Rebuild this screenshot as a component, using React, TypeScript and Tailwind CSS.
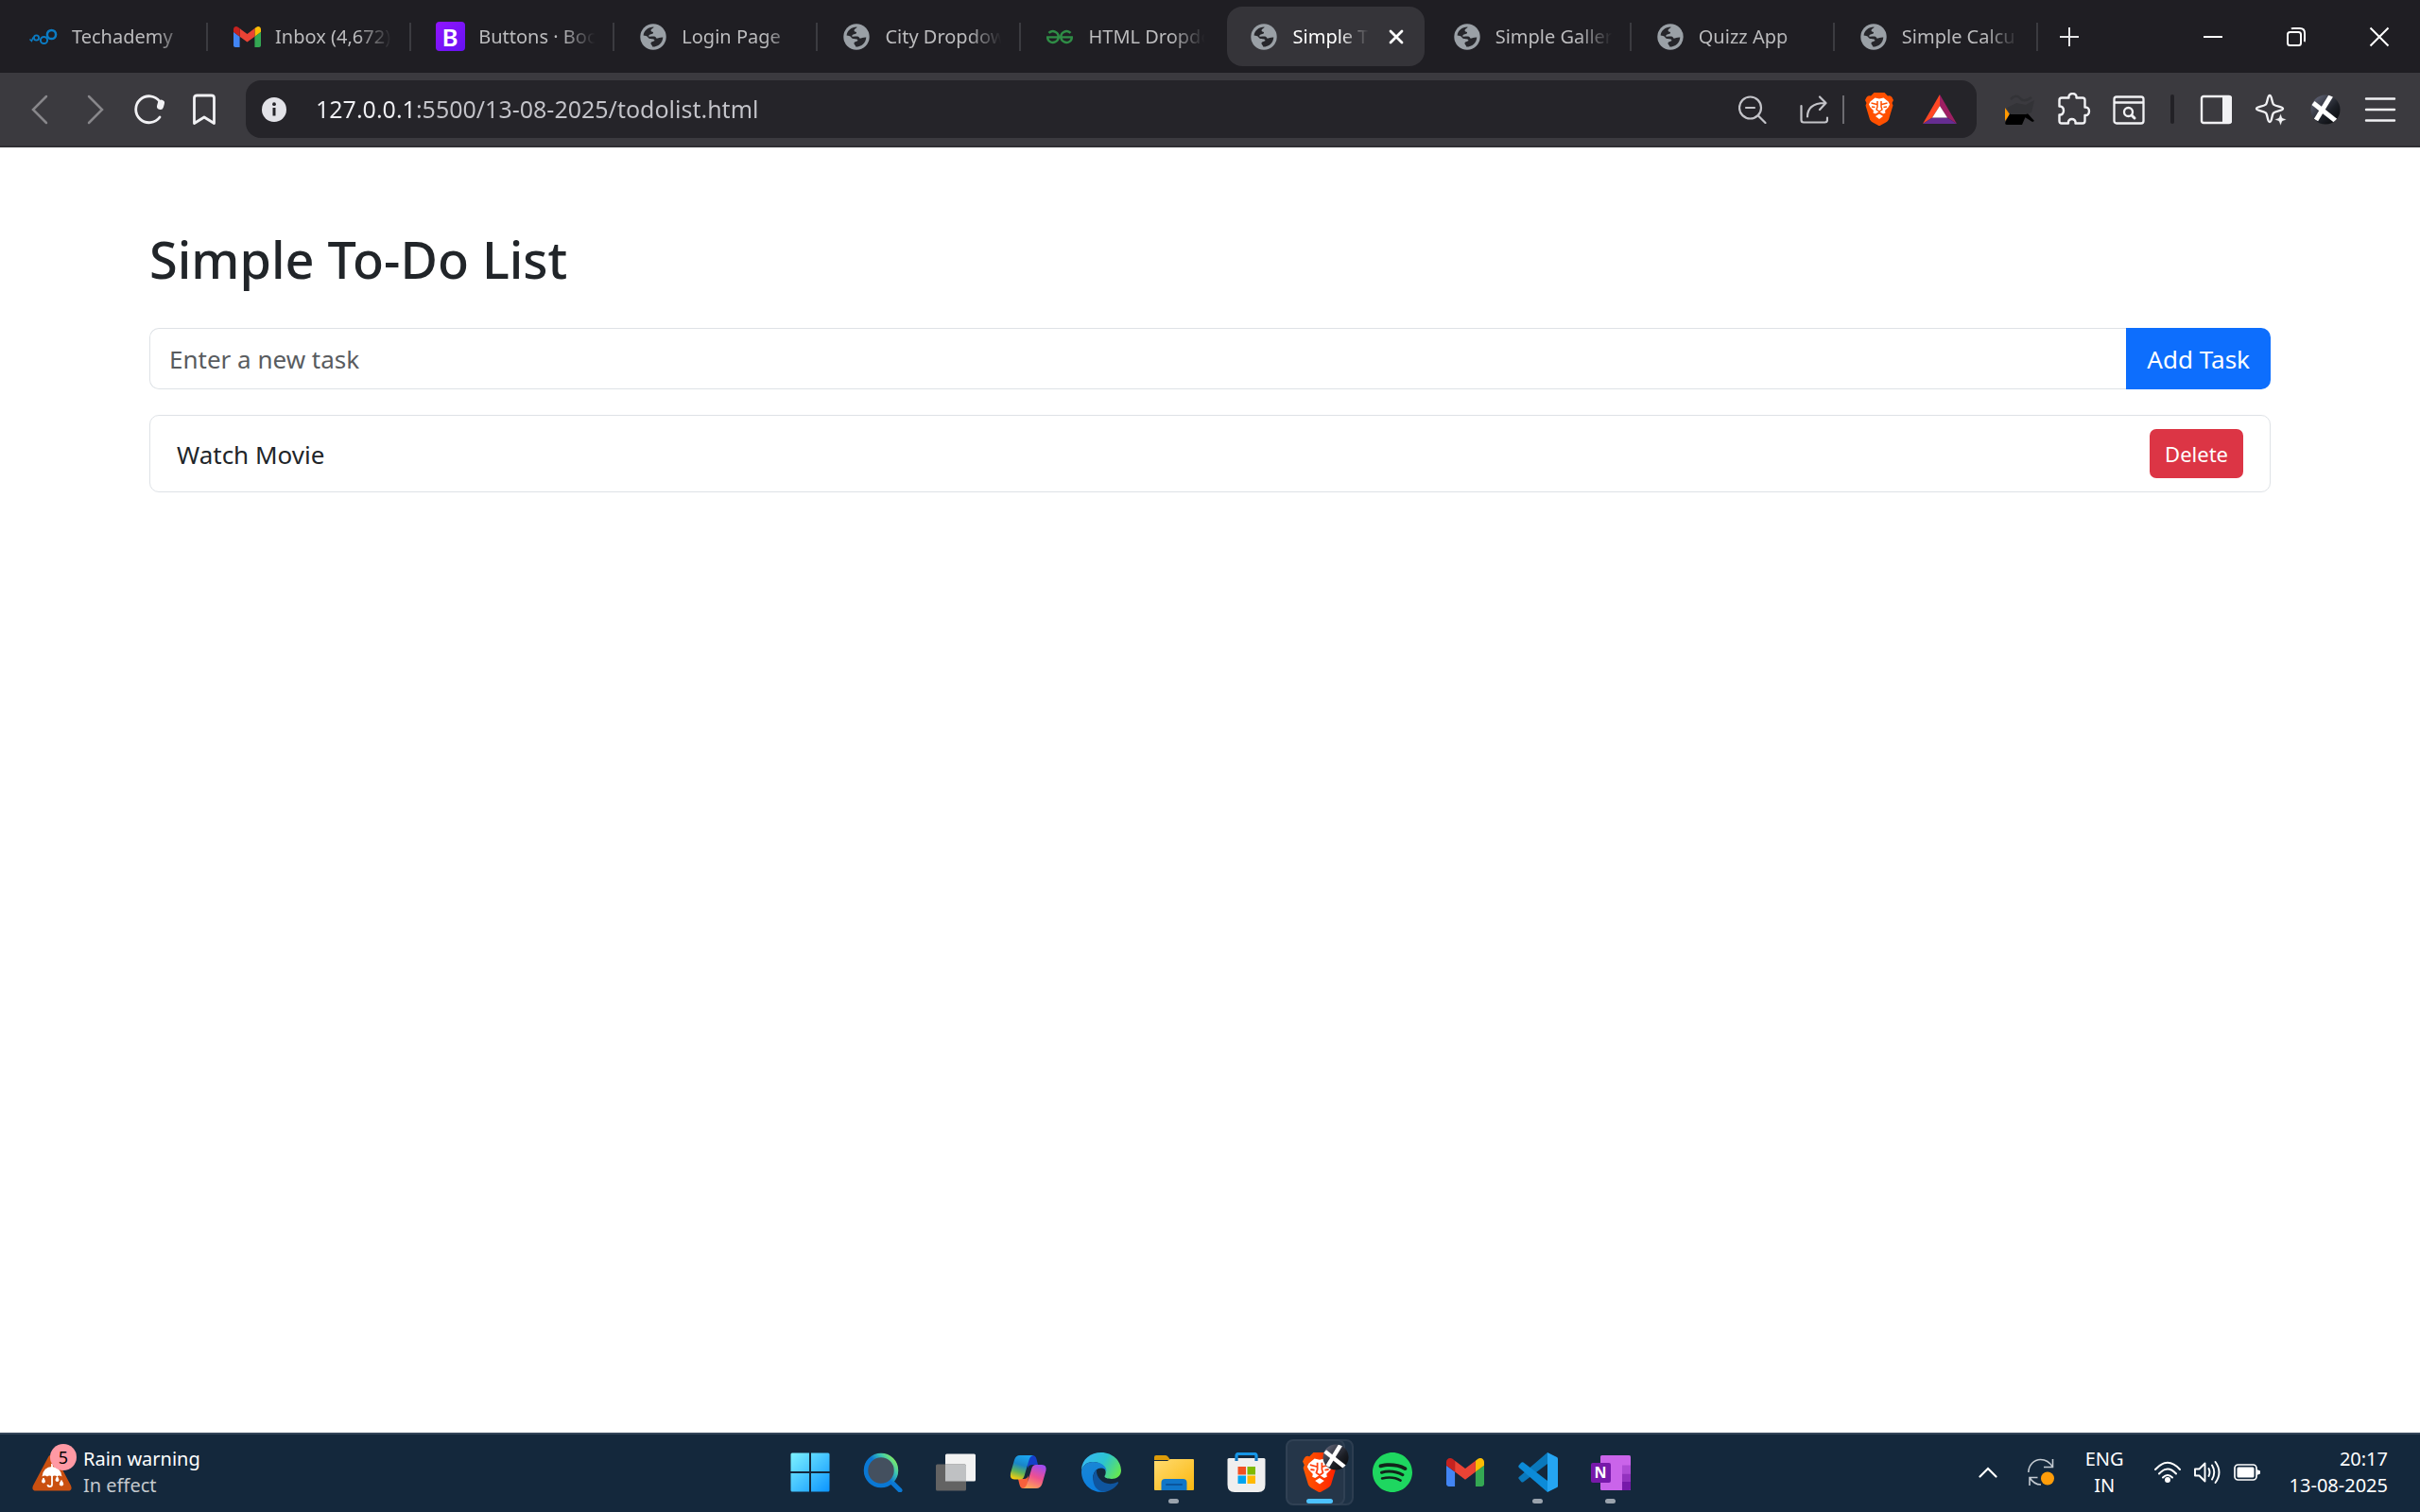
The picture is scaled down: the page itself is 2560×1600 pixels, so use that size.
import React, { useState } from "react";
import { SiBrave, SiGeeksforgeeks, SiSpotify } from "react-icons/si";

function GlobeIcon() {
  return (
    <svg viewBox="0 0 28 28" className="size-7">
      <circle cx="14" cy="14" r="13.7" fill="#9aa0a6" />
      <path d="M3.6 12.6C4 7.5 8.500 3.700 14.500 3.600C15 5 11.600 5 11.600 7.400C11.600 9 14.600 8 14 10C13.400 11.500 9.500 10.800 9 13.600C12.500 14 16.500 12.600 17.300 15.400C19 15.800 20.300 14.200 24.300 14.400C24 20 19.500 24.500 13.200 24.500C13.200 22.500 10.700 21.800 11.700 20C13 18.200 15.600 19.600 15.300 17.200C14.500 15.800 11 16.800 9 15.200C8 14.200 8 13 3.600 12.600Z" fill="#26262b" />
    </svg>
  );
}

function TechademyIcon() {
  return (
    <svg viewBox="0 0 32 24" className="h-6 w-8" fill="none" stroke="#0b7cc4">
      <path d="M1.500 14.500L3.500 16.500L5 12.500" strokeWidth="1.500" />
      <circle cx="8.500" cy="13" r="2.600" strokeWidth="1.800" />
      <circle cx="16.500" cy="15.500" r="3.600" strokeWidth="2" />
      <circle cx="24.500" cy="9.500" r="4.600" strokeWidth="2.500" />
    </svg>
  );
}

function GmailIcon({ className }: { className: string }) {
  return (
    <svg viewBox="52 42 88 66" className={className}>
      <path fill="#4285f4" d="M58 108h14V74L52 59v43c0 3.320 2.690 6 6 6" />
      <path fill="#34a853" d="M120 108h14c3.320 0 6-2.690 6-6V59l-20 15" />
      <path fill="#fbbc04" d="M120 48v26l20-15v-8c0-7.420-8.470-11.650-14.400-7.200" />
      <path fill="#ea4335" d="M72 74V48l24 18 24-18v26L96 92" />
      <path fill="#c5221f" d="M52 51v8l20 15V48l-5.600-4.200c-5.940-4.450-14.400-.22-14.400 7.200" />
    </svg>
  );
}

function BootstrapIcon() {
  return (
    <span className="flex size-[31px] items-center justify-center rounded-[4px] bg-linear-to-br from-[#9013fe] to-[#6610f2] text-[26px] leading-none font-semibold text-white">
      B
    </span>
  );
}

function ProfileIcon({ className }: { className: string }) {
  return (
    <svg viewBox="0 0 32 32" className={className}>
      <defs>
        <linearGradient id="profile" x1="0" y1="0" x2="1" y2="1">
          <stop offset="0" stopColor="#6d7084" />
          <stop offset=".6" stopColor="#1c1f26" />
          <stop offset="1" stopColor="#050607" />
        </linearGradient>
        <clipPath id="profileClip">
          <circle cx="16" cy="16" r="15.500" />
        </clipPath>
      </defs>
      <circle cx="16" cy="16" r="15.500" fill="url(#profile)" />
      <g clipPath="url(#profileClip)" stroke="#fff" strokeWidth="5">
        <path d="M22 1L6 27" />
        <path d="M3 9L27 28" />
      </g>
    </svg>
  );
}

type Tab = { title: string; icon: React.ReactNode; divider: boolean; active?: boolean };

const tabs: Tab[] = [
  { title: "Techademy", icon: <TechademyIcon />, divider: true },
  { title: "Inbox (4,672)", icon: <GmailIcon className="h-[22px] w-[29px]" />, divider: true },
  { title: "Buttons · Boo", icon: <BootstrapIcon />, divider: true },
  { title: "Login Page", icon: <GlobeIcon />, divider: true },
  { title: "City Dropdow", icon: <GlobeIcon />, divider: true },
  { title: "HTML Dropdo", icon: <SiGeeksforgeeks className="size-7 text-[#2f8d46]" />, divider: false },
  { title: "Simple T", icon: <GlobeIcon />, divider: false, active: true },
  { title: "Simple Galler", icon: <GlobeIcon />, divider: true },
  { title: "Quizz App", icon: <GlobeIcon />, divider: true },
  { title: "Simple Calcu", icon: <GlobeIcon />, divider: true },
];

function TabStrip() {
  return (
    <div className="flex items-center bg-[#1f1e23] pl-[5px] text-white">
      <div role="tablist" aria-label="Open tabs" className="flex w-[2151px] min-w-0 items-center py-[7px]">
        {tabs.map((tab) => (
          <div
            key={tab.title}
            className={
              tab.divider
                ? "relative flex min-w-0 flex-1 items-center after:absolute after:right-0 after:h-[30px] after:w-0.5 after:bg-[#3b3b40]"
                : "relative flex min-w-0 flex-1 items-center"
            }
          >
            <div
              className={
                tab.active
                  ? "mr-1 ml-0.5 flex min-w-0 flex-1 items-center rounded-2xl bg-[#353439] pr-5"
                  : "flex min-w-0 flex-1 items-center"
              }
            >
              <button
                role="tab"
                aria-selected={!!tab.active}
                className={
                  tab.active
                    ? "flex h-[63px] min-w-0 flex-1 items-center pl-[23px]"
                    : "flex h-[63px] min-w-0 flex-1 items-center pl-[25px]"
                }
              >
                <span className="flex w-8 shrink-0 items-center justify-center">{tab.icon}</span>
                <span
                  className={
                    tab.active
                      ? "ml-[15px] w-20 overflow-hidden text-left text-xl whitespace-nowrap text-white [mask-image:linear-gradient(to_right,#000_60%,transparent)]"
                      : "ml-[14px] w-[126px] overflow-hidden text-left text-xl whitespace-nowrap text-[#bcbcbe] [mask-image:linear-gradient(to_right,#000_70%,transparent_98%)]"
                  }
                >
                  {tab.title}
                </span>
              </button>
              {tab.active && (
                <button aria-label="Close tab" className="shrink-0">
                  <svg viewBox="0 0 20 20" className="size-5" stroke="#fff" strokeWidth="2.800" strokeLinecap="round">
                    <path d="M4 4L16 16M16 4L4 16" />
                  </svg>
                </button>
              )}
            </div>
          </div>
        ))}
      </div>
      <button aria-label="New tab" className="ml-[22px]">
        <svg viewBox="0 0 22 22" className="size-[22px]" stroke="#e6e6e8" strokeWidth="2">
          <path d="M11 1V21M1 11H21" />
        </svg>
      </button>
      <div className="ml-auto flex items-center gap-[66px] pr-8">
        <button aria-label="Minimize">
          <svg viewBox="0 0 22 22" className="size-[22px]" stroke="#fff" strokeWidth="2">
            <path d="M1 11H21" />
          </svg>
        </button>
        <button aria-label="Restore">
          <svg viewBox="0 0 22 22" className="size-[22px]" fill="none" stroke="#fff" strokeWidth="2">
            <rect x="2" y="6" width="14" height="14" rx="2.500" />
            <path d="M6 2.500Q6.500 2 8 2H15Q20 2 20 7V14Q20 15.500 19.500 16" />
          </svg>
        </button>
        <button aria-label="Close window">
          <svg viewBox="0 0 22 22" className="size-[22px]" stroke="#fff" strokeWidth="2">
            <path d="M1.500 1.500L20.500 20.500M20.500 1.500L1.500 20.500" />
          </svg>
        </button>
      </div>
    </div>
  );
}

function ToolButton({ label, children }: { label: string; children: React.ReactNode }) {
  return (
    <button aria-label={label} className="flex size-[34px] shrink-0 items-center justify-center">
      {children}
    </button>
  );
}

function BraveLion({ className, fill }: { className: string; fill: string }) {
  return (
    <svg viewBox="0 0 60 70" className={className}>
      <path
        d="M19 0H41L48 7Q54 5 57 10L60 16L57 22L59 27L50 57Q48 61 44 63L33 69Q30 71 27 69L16 63Q12 61 10 57L1 27L3 22L0 16L3 10Q6 5 12 7Z"
        fill={fill}
      />
      <path
        d="M30 13L39 11L49 19L52 25L49 31L42 38L43 43L38 45L30 40L22 45L17 43L18 38L11 31L8 25L11 19L21 11Z"
        fill="#fff"
      />
      <path d="M30 45L38 50L30 56L22 50Z" fill="#fff" />
      <path
        d="M13 22L25 25M47 22L35 25M26 18V30L24 36L30 40L36 36L34 30V18M14 30L21 31M46 30L39 31"
        fill="none"
        stroke={fill.startsWith("url") ? "#ff4010" : fill}
        strokeWidth="3"
        strokeLinejoin="round"
      />
    </svg>
  );
}

function Toolbar() {
  return (
    <div className="flex items-center border-b-2 border-[#302f34] bg-[#3b3a3f] px-[25px] py-2">
      <nav aria-label="Navigation" className="flex items-center gap-6">
        <ToolButton label="Back">
          <svg viewBox="0 0 34 34" className="size-[34px]" fill="none" stroke="#88878b" strokeWidth="2.500" strokeLinecap="round">
            <path d="M24 3L10 17L24 31" />
          </svg>
        </ToolButton>
        <ToolButton label="Forward">
          <svg viewBox="0 0 34 34" className="size-[34px]" fill="none" stroke="#88878b" strokeWidth="2.500" strokeLinecap="round">
            <path d="M11 3L25 17L11 31" />
          </svg>
        </ToolButton>
        <ToolButton label="Reload">
          <svg viewBox="0 0 34 34" className="size-[34px]" fill="none" stroke="#f1f1f4" strokeLinecap="round">
            <path d="M28 25A14 14 0 1 1 28 8.500" strokeWidth="2.800" />
            <path d="M29.500 10L28.500 13.500" strokeWidth="7" />
          </svg>
        </ToolButton>
        <ToolButton label="Bookmark">
          <svg viewBox="0 0 34 34" className="size-[34px]" fill="none" stroke="#f1f1f4" strokeWidth="2.800" strokeLinejoin="round">
            <path d="M6.500 4.500Q6.500 2 9.500 2H24.500Q27.500 2 27.500 4.500V31.500L17 25L6.500 31.500Z" />
          </svg>
        </ToolButton>
      </nav>

      <div className="mr-7 ml-[27px] flex h-[61px] min-w-0 flex-1 items-center rounded-2xl bg-[#252429] pr-[21px] pl-[17px]">
        <button aria-label="Site information">
          <svg viewBox="0 0 26 26" className="size-[26px]">
            <circle cx="13" cy="13" r="13" fill="#e3e3e8" />
            <path d="M13 11V19.500" stroke="#252429" strokeWidth="3" />
            <circle cx="13" cy="7.200" r="1.900" fill="#252429" />
          </svg>
        </button>
        <input
          aria-label="Address"
          defaultValue="127.0.0.1:5500/13-08-2025/todolist.html"
          className="ml-[31px] min-w-0 flex-1 bg-[linear-gradient(to_right,#f0f0f4_105px,#c4c4ca_105px)] bg-clip-text pb-0.5 text-[25px] leading-9 text-transparent caret-white outline-none"
        />
        <button aria-label="Zoom out">
          <svg viewBox="0 0 30 30" className="size-[30px]" fill="none" stroke="#c3c3c8" strokeWidth="2.200" strokeLinecap="round">
            <circle cx="12.500" cy="13" r="11.500" />
            <path d="M8 13H17M21 21.500L28.500 29" />
          </svg>
        </button>
        <button aria-label="Share" className="ml-[35px]">
          <svg viewBox="0 0 30 30" className="size-[30px]" fill="none" stroke="#c3c3c8" strokeWidth="2.200" strokeLinecap="round" strokeLinejoin="round">
            <path d="M1.500 11V26Q1.500 28.500 4 28.500H26.500Q29 28.500 29 26V23.500" />
            <path d="M8 22.500C8 14 13 8 26.500 8M21 1.500L27.500 8L21 15" />
          </svg>
        </button>
        <span className="ml-[15px] h-[30px] w-0.5 bg-[#6c6b70]" />
        <button aria-label="Brave Shields" className="ml-[22px]">
          <BraveLion className="h-[35px] w-[30px]" fill="#ff5000" />
        </button>
        <button aria-label="Brave Rewards" className="ml-[31px]">
          <svg viewBox="0 0 36 32" className="h-8 w-9">
            <path d="M18 0L0 31L10 24.500L18 12Z" fill="#ff4724" />
            <path d="M18 0L36 31L26 24.500L18 12Z" fill="#9e1f63" />
            <path d="M0 31H36L26 24.500H10Z" fill="#662d91" />
            <path d="M18 12L10 24.500H26Z" fill="#fff" />
          </svg>
        </button>
      </div>

      <div className="flex items-center gap-6">
        <ToolButton label="Extension">
          <svg viewBox="0 0 34 34" className="size-[34px]">
            <path d="M2 15L7 22L2 29Z" fill="#ff9800" />
            <path d="M7 21.500H25L20 33H4Q1.500 33 2.500 30Z" fill="#000" />
            <path d="M25 20L33 29L31 30L23 25Z" fill="#000" />
            <path d="M4 15L14 10L24 12L33 7L30 20L24 22H8Z" fill="#333337" />
            <path d="M8 6Q14 0 18 5T30 4" fill="none" stroke="#333337" strokeWidth="2.500" />
          </svg>
        </ToolButton>
        <ToolButton label="Extensions">
          <svg viewBox="0 0 36 36" className="size-9 shrink-0" fill="none" stroke="#f1f1f4" strokeWidth="2.400" strokeLinejoin="round">
            <path d="M5 5.500H12.500C11.500 -0.500 21.500 -0.500 20.500 5.500H27Q29.500 5.500 29.500 8V15.500C35.500 14.500 35.500 25 29.500 24V30Q29.500 32.500 27 32.500H19.500C20.500 26.500 11 26.500 12 32.500H5Q2.500 32.500 2.500 30V23.500C8.500 24.500 8.500 13.500 2.500 14.500V8Q2.500 5.500 5 5.500Z" />
          </svg>
        </ToolButton>
        <ToolButton label="Search page">
          <svg viewBox="0 0 34 34" className="size-[34px]" fill="none" stroke="#f1f1f4" strokeWidth="2.300" strokeLinecap="round">
            <rect x="1.500" y="3.500" width="31" height="28" rx="2.500" />
            <path d="M2 9.500H32" />
            <circle cx="16.500" cy="19.500" r="4.500" />
            <path d="M20 23L23 26" strokeWidth="3" />
          </svg>
        </ToolButton>
        <span className="mx-[3px] h-[31px] w-1 rounded-full bg-[#222126]" />
        <ToolButton label="Sidebar">
          <svg viewBox="0 0 34 34" className="size-[34px]">
            <rect x="2" y="3" width="31" height="28" rx="2" fill="none" stroke="#f1f1f4" strokeWidth="2.400" />
            <path d="M24 3H31Q33 3 33 5V29Q33 31 31 31H24Z" fill="#f1f1f4" />
          </svg>
        </ToolButton>
        <ToolButton label="Leo AI">
          <svg viewBox="0 0 34 34" className="size-[34px]">
            <path
              d="M16 2C18.500 2 18 9 20 11.500C22.500 14 30 13.500 30 16C30 18.500 22.500 18 20 20.500C18 23 18.500 30 16 30C13.500 30 14 23 12 20.500C9.500 18 2 18.500 2 16C2 13.500 9.500 14 12 11.500C14 9 13.500 2 16 2Z"
              fill="none"
              stroke="#f1f1f4"
              strokeWidth="2.400"
            />
            <path d="M27.500 21L29.300 25.700L34 27.500L29.300 29.300L27.500 34L25.700 29.300L21 27.500L25.700 25.700Z" fill="#f1f1f4" stroke="#3b3a3f" strokeWidth=".5" />
          </svg>
        </ToolButton>
        <ToolButton label="Profile">
          <ProfileIcon className="size-8" />
        </ToolButton>
        <ToolButton label="Menu">
          <svg viewBox="0 0 34 34" className="size-[34px]" stroke="#f1f1f4" strokeWidth="2.400" strokeLinecap="round">
            <path d="M2 5.500H32M2 17H32M2 28.500H32" />
          </svg>
        </ToolButton>
      </div>
    </div>
  );
}

function TodoPage() {
  const [tasks, setTasks] = useState<string[]>(["Watch Movie"]);
  const [draft, setDraft] = useState("");

  function addTask(event: React.FormEvent) {
    event.preventDefault();
    if (draft.trim()) {
      setTasks([...tasks, draft.trim()]);
      setDraft("");
    }
  }

  return (
    <main className="flex-1 px-[158px] pt-[86px] text-[26px] leading-[39px] text-[#212529]">
      <h1 className="mb-10 text-[54px] leading-[65px] font-medium">Simple To-Do List</h1>
      <form onSubmit={addTask} className="mb-[27px] flex">
        <input
          aria-label="New task"
          value={draft}
          onChange={(event) => setDraft(event.target.value)}
          placeholder="Enter a new task"
          className="min-w-0 flex-1 rounded-l-[10px] border border-r-0 border-[#dee2e6] px-5 pt-[13px] pb-[11px] outline-none placeholder:text-[#595c5f]"
        />
        <button className="rounded-r-[10px] bg-[#0d6efd] px-[22px] pt-[14px] pb-3 text-white">Add Task</button>
      </form>
      <ul className="overflow-hidden rounded-[10px] border border-[#dee2e6]">
        {tasks.map((task, index) => (
          <li key={index} className="flex items-center justify-between border-[#dee2e6] px-7 py-3.5 not-last:border-b">
            <span className="pt-0.5">{task}</span>
            <button
              onClick={() => setTasks(tasks.filter((_, i) => i !== index))}
              className="rounded-[7px] bg-[#dc3545] px-4 py-[9px] text-[22px] leading-[34px] text-white"
            >
              Delete
            </button>
          </li>
        ))}
      </ul>
    </main>
  );
}

function WindowsIcon() {
  return (
    <svg viewBox="0 0 42 42" className="size-[42px]">
      <defs>
        <linearGradient id="win" gradientUnits="userSpaceOnUse" x1="0" y1="0" x2="42" y2="42">
          <stop offset="0" stopColor="#7ff3ff" />
          <stop offset="1" stopColor="#0a94ff" />
        </linearGradient>
      </defs>
      <path fill="url(#win)" d="M2 .5H20V20H.5V2Q.5.500 2 .5ZM22 .5H40Q41.500.500 41.500 2V20H22ZM.5 22H20V41.500H2Q.5 41.500.500 40ZM22 22H41.500V40Q41.500 41.500 40 41.500H22Z" />
    </svg>
  );
}

function SearchIcon() {
  return (
    <svg viewBox="0 0 42 42" className="size-[42px]">
      <defs>
        <linearGradient id="srch" x1=".3" y1=".6" x2=".9" y2=".1">
          <stop offset=".3" stopColor="#0a78d4" />
          <stop offset=".7" stopColor="#3fc8b0" />
          <stop offset="1" stopColor="#7be86a" />
        </linearGradient>
      </defs>
      <path d="M31 32L39 40" stroke="#0a78d4" strokeWidth="5" strokeLinecap="round" />
      <circle cx="19" cy="19" r="16" fill="#44505f" stroke="url(#srch)" strokeWidth="4.500" />
    </svg>
  );
}

function TaskViewIcon() {
  return (
    <svg viewBox="0 0 42 42" className="size-[42px]">
      <rect x="10" y="1.500" width="32" height="29" rx="1.500" fill="#f2f2f2" />
      <rect x="0" y="12.500" width="32" height="28" rx="1.500" fill="#636363" />
      <path d="M10 12.500H30.500Q32 12.500 32 14V30.500H10Z" fill="#bfc1c3" />
    </svg>
  );
}

function CopilotIcon() {
  return (
    <svg viewBox="0 0 42 42" className="size-[42px]">
      <defs>
        <linearGradient id="cpA" x1=".6" y1="0" x2=".3" y2="1">
          <stop offset="0" stopColor="#1ba5f0" />
          <stop offset=".4" stopColor="#1a86c8" />
          <stop offset=".7" stopColor="#5fb35a" />
          <stop offset="1" stopColor="#f5cc10" />
        </linearGradient>
        <linearGradient id="cpB" x1=".7" y1="0" x2=".3" y2="1">
          <stop offset="0" stopColor="#a04cf0" />
          <stop offset=".5" stopColor="#ee5090" />
          <stop offset="1" stopColor="#ffa456" />
        </linearGradient>
      </defs>
      <path d="M20 3H25Q28.500 3 29.500 7L31 13H25Q21 13 20 17Z" fill="#1440c8" />
      <path d="M20 38H15Q12.500 38 11.500 34L10 28H16Q20 28 21 24Z" fill="#f8603c" />
      <path d="M12 3H26Q22.500 4 21.500 8L16.500 25Q15.500 28.500 12 28.500H6Q1 28.500 2 22L6 8Q7.500 3 12 3Z" fill="url(#cpA)" />
      <path d="M29 38H15Q18.500 37 19.500 33L24.500 16.500Q25.500 13 29 13H35Q40.500 13 39.500 19L35.500 33Q34 38 29 38Z" fill="url(#cpB)" />
    </svg>
  );
}

function EdgeIcon() {
  return (
    <svg viewBox="0 0 42 42" className="size-[42px]">
      <defs>
        <linearGradient id="edA" x1="0" y1=".3" x2="1" y2=".7">
          <stop offset="0" stopColor="#36b8f2" />
          <stop offset=".5" stopColor="#2cc3d0" />
          <stop offset="1" stopColor="#66e84f" />
        </linearGradient>
        <linearGradient id="edB" x1=".3" y1="0" x2=".5" y2="1">
          <stop offset="0" stopColor="#1a86d4" />
          <stop offset="1" stopColor="#0a7ee0" />
        </linearGradient>
      </defs>
      <path d="M0 20C-.5 8 9 0 21 0C33 0 42 9 42 19C42 25 37 28 32 28C27 28 24 26.500 24.500 25C28 20 24 10 12 10C6 10 1 14 0 20Z" fill="url(#edA)" />
      <path d="M0 20C1 14 6 10 12 10C21 10 26.500 14.500 26.500 20C25 16 19 15 15 19C9 26 13 38 27 41C12 45 0 34 0 20Z" fill="url(#edB)" />
      <path d="M16 18C9 25 12 42 25 41.500C31 41 36 37 39 32.500C39.500 31.500 38.500 31 37.500 31.500C26 37 15 28 16 18Z" fill="#0f559f" />
    </svg>
  );
}

function FolderIcon() {
  return (
    <svg viewBox="0 0 42 42" className="size-[42px]">
      <defs>
        <linearGradient id="fld" x1="0" y1="0" x2="1" y2="1">
          <stop offset="0" stopColor="#ffdb70" />
          <stop offset="1" stopColor="#fbb80f" />
        </linearGradient>
      </defs>
      <path d="M0 5Q0 3 2 3H12Q13.500 3 15 5L17 8H0Z" fill="#dd9b08" />
      <path d="M0 9H14L17 7H41Q42 7 42 8V39Q42 40 41 40H1Q0 40 0 39Z" fill="url(#fld)" />
      <path d="M7.500 40V32Q7.500 28 11.500 28H30.500Q34.500 28 34.500 32V40Z" fill="#1076c8" />
      <path d="M13 34H29" stroke="#0b559c" strokeWidth="2" strokeLinecap="round" />
    </svg>
  );
}

function StoreIcon() {
  return (
    <svg viewBox="0 0 42 42" className="size-[42px]">
      <path d="M10 9V3.500Q10 1.500 12 1.500H29Q31 1.500 31 3.500V9" fill="none" stroke="#1796e6" strokeWidth="3.200" />
      <path d="M.5 7.500Q.5 6 2 6H39Q40.500 6 40.500 7.500V34Q40.500 42 33 42H8Q.5 42 .5 34Z" fill="#efefef" />
      <path d="M10 9V5.500M31 9V5.500" stroke="#1173b8" strokeWidth="3.200" />
      <path d="M11.500 15H20V23.500H11.500Z" fill="#f25022" />
      <path d="M21.500 15H30V23.500H21.500Z" fill="#7fba00" />
      <path d="M11.500 24.500H20V33H11.500Z" fill="#00a4ef" />
      <path d="M21.500 24.500H30V33H21.500Z" fill="#ffb900" />
    </svg>
  );
}

function VsCodeIcon() {
  return (
    <svg viewBox="0 0 42 42" className="size-[42px]">
      <path d="M.8 28Q-.3 27 .8 26L31 0V12L5.500 31.300Q4.300 32 3.200 31Z" fill="#0a78bb" />
      <path d="M.8 13.500Q-.3 14.800 .8 16L31 42V30L5.500 10.500Q4.300 9.800 3.200 10.800Z" fill="#0c8bd8" />
      <path d="M31 0L41 5Q42 5.500 42 6.500V35.500Q42 36.500 41 37L31 42Z" fill="#25a5f2" />
    </svg>
  );
}

function OneNoteIcon() {
  return (
    <span className="relative flex h-[37px] w-[42px] items-center">
      <svg viewBox="0 0 42 37" className="absolute h-[37px] w-[42px]">
        <rect x="10" y="0" width="32" height="37" rx="1.500" fill="#ca64ea" />
        <path d="M33 10.500H42V19.500H33Z" fill="#ae4bd5" />
        <path d="M33 19.500H42V28H33Z" fill="#9332bf" />
        <path d="M33 28H42V35.500Q42 37 40.500 37H33Z" fill="#7719aa" />
      </svg>
      <span className="relative flex size-[21px] items-center justify-center rounded-xs bg-[#7719aa] text-base leading-none font-bold text-white">
        N
      </span>
    </span>
  );
}

function BraveAppIcon() {
  return (
    <span className="relative flex w-[34px] justify-center">
      <svg className="absolute size-0">
        <defs>
          <linearGradient id="lion" x1="0" y1="0" x2="1" y2="0">
            <stop offset="0" stopColor="#ff5a00" />
            <stop offset="1" stopColor="#ff2000" />
          </linearGradient>
        </defs>
      </svg>
      <BraveLion className="h-[42px] w-9 shrink-0" fill="url(#lion)" />
      <span className="absolute -top-[9px] -right-[14px]">
        <ProfileIcon className="size-7" />
      </span>
    </span>
  );
}

const apps: { name: string; icon: React.ReactNode; open?: boolean; active?: boolean }[] = [
  { name: "Start", icon: <WindowsIcon /> },
  { name: "Search", icon: <SearchIcon /> },
  { name: "Task view", icon: <TaskViewIcon /> },
  { name: "Copilot", icon: <CopilotIcon /> },
  { name: "Edge", icon: <EdgeIcon /> },
  { name: "File Explorer", icon: <FolderIcon />, open: true },
  { name: "Microsoft Store", icon: <StoreIcon /> },
  { name: "Brave", icon: <BraveAppIcon />, active: true },
  {
    name: "Spotify",
    icon: (
      <span className="flex rounded-full bg-[#12241a]">
        <SiSpotify className="size-[42px] text-[#1ed760]" />
      </span>
    ),
  },
  { name: "Gmail", icon: <GmailIcon className="h-[30px] w-10" /> },
  { name: "Visual Studio Code", icon: <VsCodeIcon />, open: true },
  { name: "OneNote", icon: <OneNoteIcon />, open: true },
];

function Taskbar() {
  return (
    <footer className="grid grid-cols-[1fr_auto_1fr] items-center border-t-2 border-[#34465a] bg-[#14283c] pb-0.5 text-xl leading-7 text-white">
      <button className="flex items-center pl-[34px] text-left">
        <span className="relative flex">
          <svg viewBox="0 0 42 40" className="h-10 w-[42px]">
            <path d="M17.500 3Q21 -1 24.500 3L41 34Q43 39.500 38 39.500H4Q-1 39.500 1 34Z" fill="#ca5010" />
            <path d="M10.500 24.500Q12 14 21 14T31.500 24.500Q28.500 22.500 26.500 24.500Q24 22.500 21 24.500Q18 22.500 16 24.500Q13.500 22.500 10.500 24.500Z" fill="#fff" />
            <path d="M21 11V33Q21 35 18.500 35Q16.500 35 16.500 33" fill="none" stroke="#fff" strokeWidth="1.800" />
            <path d="M12 26Q15 31 12 31T12 26ZM26.500 24.500Q29.500 29.500 26.500 29.500T26.500 24.500ZM31 28.500Q34.500 34 31 34T31 28.500Z" fill="#fff" stroke="#fff" />
          </svg>
          <span className="absolute -top-2.5 -right-[5px] flex size-7 items-center justify-center rounded-full bg-[#ff99a4] text-lg leading-none text-black">
            5
          </span>
        </span>
        <span className="ml-3">
          <span className="block">Rain warning</span>
          <span className="block text-[#c3c8cd]">In effect</span>
        </span>
      </button>

      <nav aria-label="Apps" className="flex">
        {apps.map((app) => (
          <button
            key={app.name}
            aria-label={app.name}
            className="relative flex h-20 w-[77px] items-center justify-center"
          >
            {app.active && (
              <>
                <span className="absolute inset-y-[5px] right-0.5 left-9 rounded-lg border-2 border-[#2c3d50] bg-[#1d3145]" />
                <span className="absolute inset-y-[5px] right-[11px] left-[3px] rounded-lg border-2 border-[#304154] bg-[#253649]" />
                <span className="absolute bottom-[7px] h-[5px] w-7 rounded-full bg-[#4cc2ff]" />
              </>
            )}
            {app.open && <span className="absolute bottom-[7px] h-[5px] w-[11px] rounded-full bg-[#9aa3ad]" />}
            {app.icon}
          </button>
        ))}
      </nav>

      <div className="flex items-center justify-end pr-[34px]">
        <button aria-label="Show hidden icons">
          <svg viewBox="0 0 20 12" className="h-3 w-5" fill="none" stroke="#fff" strokeWidth="2.200" strokeLinecap="round">
            <path d="M1.500 10.500L10 2L18.500 10.500" />
          </svg>
        </button>
        <button aria-label="Sync status" className="ml-8">
          <svg viewBox="0 0 28 30" className="h-[30px] w-7" fill="none" stroke="#c3cad1" strokeWidth="1.600">
            <path d="M.8 15C1 7 7 1.500 13.500 1.500C19 1.500 23.500 4.500 26.500 9.500M26.500 1V9.500H17" />
            <path d="M14 28C9 28 5 25.500 2 20.500M2 29V20.500H10.500" />
            <circle cx="21" cy="21.500" r="7" fill="#ff9d0a" stroke="none" />
          </svg>
        </button>
        <button className="ml-[33px] text-center">
          <span className="block">ENG</span>
          <span className="block">IN</span>
        </button>
        <button aria-label="Network, sound and battery" className="ml-8 flex items-center gap-3.5">
          <svg viewBox="0 0 28 24" className="h-6 w-7" fill="none" stroke="#fff" strokeWidth="2" strokeLinecap="round">
            <path d="M1 9Q14 -5.500 27 9M5 13.500Q14 3.500 23 13.500M9 17.500Q14 12.500 19 17.500" />
            <circle cx="14" cy="20" r="2" fill="#fff" />
          </svg>
          <svg viewBox="0 0 28 24" className="h-6 w-7" fill="none" stroke="#fff" strokeWidth="1.900" strokeLinecap="round" strokeLinejoin="round">
            <path d="M1 8.500H5.500L11.500 2.500V21.500L5.500 15.500H1Z" />
            <path d="M15.500 8Q17.500 12 15.500 16M19 4.500Q23.500 12 19 19.500M22.500 1Q30.500 12 22.500 23" />
          </svg>
          <svg viewBox="0 0 28 18" className="h-[18px] w-7">
            <rect x="1" y="1" width="23" height="16" rx="3.500" fill="none" stroke="#fff" strokeWidth="1.700" />
            <rect x="3.500" y="3.500" width="18" height="11" rx="1.500" fill="#fff" />
            <path d="M24.500 6L28 7.500V10.500L24.500 12Z" fill="#fff" />
          </svg>
        </button>
        <button className="ml-[31px] text-right">
          <span className="block">20:17</span>
          <span className="block">13-08-2025</span>
        </button>
      </div>
    </footer>
  );
}

export default function App() {
  return (
    <div className="flex min-h-screen flex-col bg-white font-['Noto_Sans','Open_Sans',sans-serif]">
      <header>
        <TabStrip />
        <Toolbar />
      </header>
      <TodoPage />
      <Taskbar />
    </div>
  );
}
